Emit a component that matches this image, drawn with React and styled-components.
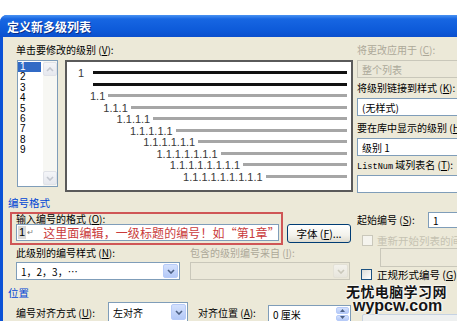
import React from 'react';
import styled, { createGlobalStyle } from 'styled-components';

const GlobalStyle = createGlobalStyle`
  html, body {
    margin: 0;
    padding: 0;
    background: #fff;
  }
  body {
    font-family: "Noto Sans CJK SC", "Noto Sans", sans-serif;
  }
  * {
    box-sizing: border-box;
  }
`;

const Page = styled.div`
  position: relative;
  width: 457px;
  height: 321px;
  overflow: hidden;
  padding-top: 15px;
  background: #fff;
`;

const Window = styled.div`
  width: 520px;
  height: 330px;
  display: flex;
  flex-direction: column;
  background: #0b52d6;
  border-top-left-radius: 7px;
  overflow: hidden;
`;

const TitleBar = styled.div`
  height: 22px;
  flex: none;
  display: flex;
  align-items: center;
  padding-left: 7px;
  padding-top: 1px;
  background: linear-gradient(#4a92f2 0%, #1766e2 18%, #0d5ad9 70%, #0b4fcd 100%);
  color: #fff;
  font-size: 12px;
  font-weight: 700;
  text-shadow: 1px 1px 0 #0a2f8a;
  white-space: nowrap;
`;

const Body = styled.div`
  flex: 1;
  margin-left: 3px;
  background: #ece9d8;
  padding-left: 5px;
  display: flex;
  flex-direction: column;
`;

const Acc = styled.span`
  text-decoration: underline;
`;

const Label = styled.div`
  flex: none;
  height: ${p => p.$h || 14}px;
  line-height: ${p => p.$h || 14}px;
  width: ${p => (p.$w ? `${p.$w}px` : 'auto')};
  font-size: 10px;
  color: ${p => (p.$disabled ? '#aca899' : '#000')};
  white-space: nowrap;
`;

const MonoWord = styled.span`
  font-family: "Liberation Mono", monospace;
  font-size: 8.6px;
`;

/* ---------- top: level list + preview + side fields ---------- */

const TopSection = styled.div`
  height: 159px;
  flex: none;
  display: flex;
  padding-left: 8px;
`;

const LevelPane = styled.div`
  width: 337px;
  flex: none;
  padding-top: 6px;
`;

const LevelRow = styled.div`
  margin-top: 3px;
  display: flex;
  align-items: flex-start;
`;

const LevelList = styled.div`
  margin-left: 1px;
  width: 41px;
  height: 127px;
  flex: none;
  display: flex;
  border: 1px solid #7f9db9;
  background: #fff;
`;

const LevelItems = styled.div`
  flex: 1;
  padding-top: 1px;
  display: flex;
  flex-direction: column;
`;

const LevelItem = styled.div`
  height: 10.4px;
  line-height: 10.4px;
  width: 23px;
  padding-left: 2px;
  font-family: "Liberation Sans", Arial, sans-serif;
  font-size: 10px;
  color: ${p => (p.$selected ? '#fff' : '#000')};
  background: ${p => (p.$selected ? '#316ac5' : 'transparent')};
  overflow: hidden;
`;

const ScrollTrack = styled.div`
  width: 14px;
  flex: none;
  display: flex;
  flex-direction: column;
  justify-content: space-between;
  background: #f7f7f3;
  padding: 1px 0 1px 0;
`;

const ScrollButton = styled.div`
  height: 14px;
  border: 1px solid #e0e2e8;
  border-radius: 2px;
  background: linear-gradient(#f4f5f8, #e6e8ee);
  display: flex;
  align-items: center;
  justify-content: center;
`;

const Preview = styled.div`
  margin-left: 7px;
  width: 288px;
  height: 132px;
  flex: none;
  border: 2px solid #5a5a5a;
  background: #fff;
  padding: 5px 4px 0 11px;
  display: flex;
  flex-direction: column;
`;

const PreviewRow = styled.div`
  height: 11.5px;
  display: flex;
  align-items: center;
  padding-left: ${p => p.$indent}px;
`;

const PreviewNum = styled.span`
  min-width: ${p => p.$min || 0}px;
  font-family: "Liberation Sans", Arial, sans-serif;
  font-size: 11px;
  line-height: 11px;
  color: #3a3a3a;
  white-space: nowrap;
  margin-top: 2px;
`;

const PreviewLine = styled.div`
  flex: 1;
  height: 3px;
  margin-left: ${p => p.$gap}px;
  background: ${p => (p.$strong ? '#111' : '#a6a6a6')};
`;

const SidePane = styled.div`
  margin-left: 4px;
  width: 140px;
  flex: none;
  padding-top: 6px;
  display: flex;
  flex-direction: column;
`;

/* ---------- generic controls ---------- */

const Combo = styled.div`
  flex: none;
  display: flex;
  width: ${p => p.$w}px;
  height: ${p => p.$h || 18}px;
  margin-top: ${p => p.$mt || 0}px;
  margin-left: ${p => p.$ml || 0}px;
  border: 1px solid ${p => (p.$disabled ? '#c9c7ba' : '#7f9db9')};
  background: ${p => (p.$disabled ? '#ebe8d9' : '#fff')};
`;

const ComboText = styled.div`
  flex: 1;
  display: flex;
  align-items: center;
  padding-left: 4px;
  font-size: 10px;
  color: ${p => (p.$disabled ? '#aca899' : '#000')};
  white-space: nowrap;
  overflow: hidden;
`;

const DropButton = styled.div`
  width: 15px;
  flex: none;
  margin: 1px;
  border-radius: 2px;
  border: 1px solid ${p => (p.$disabled ? '#e3e1d6' : '#b7cbf8')};
  background: ${p =>
    p.$disabled
      ? 'linear-gradient(#f3f2ec, #e7e5dc)'
      : 'linear-gradient(#d4e1fd, #b4c9f7)'};
  display: flex;
  align-items: center;
  justify-content: center;
`;

const SpinBox = styled.div`
  flex: none;
  display: flex;
  flex-direction: column;
  width: 13px;
  margin: 1px;
  gap: 1px;
`;

const SpinHalf = styled.div`
  flex: 1;
  border-radius: 2px;
  border: 1px solid #b7cbf8;
  background: linear-gradient(#d4e1fd, #b4c9f7);
  display: flex;
  align-items: center;
  justify-content: center;
`;

const CheckBox = styled.div`
  width: 11px;
  height: 11px;
  flex: none;
  border: 1px solid ${p => (p.$disabled ? '#cac8bb' : '#1c5180')};
  background: ${p => (p.$disabled ? '#f5f4ee' : 'linear-gradient(135deg, #dcdcd7, #fff)')};
`;

const Chevron = ({ dir = 'down', color = '#4d6185' }) => (
  <svg width="8" height="5" viewBox="0 0 8 5">
    <path
      d={dir === 'down' ? 'M1 1 L4 4 L7 1' : 'M1 4 L4 1 L7 4'}
      fill="none"
      stroke={color}
      strokeWidth="1.6"
    />
  </svg>
);

const SpinArrow = ({ dir }) => (
  <svg width="5" height="3" viewBox="0 0 5 3">
    <path d={dir === 'up' ? 'M0 3 L2.5 0 L5 3 Z' : 'M0 0 L2.5 3 L5 0 Z'} fill="#4d6185" />
  </svg>
);

/* ---------- number format group ---------- */

const GroupTitle = styled.div`
  flex: none;
  height: 14px;
  line-height: 14px;
  margin-top: ${p => p.$mt || 0}px;
  font-size: 10.5px;
  color: #0046d5;
  white-space: nowrap;
`;

const FormatSection = styled.div`
  flex: none;
  display: flex;
  height: 70px;
`;

const FormatMain = styled.div`
  width: 345px;
  flex: none;
  display: flex;
  flex-direction: column;
`;

const FrameRow = styled.div`
  margin-top: 2px;
  display: flex;
  align-items: flex-end;
`;

const AnnotationFrame = styled.div`
  margin-left: 2px;
  width: 273px;
  flex: none;
  border: 2px solid #cf5656;
  padding: 0 2px 2px 4px;
`;

const NumberInput = styled.div`
  height: 17px;
  display: flex;
  align-items: center;
  border: 1px solid #7f9db9;
  background: #fff;
  padding-left: 1px;
  white-space: nowrap;
  overflow: hidden;
`;

const NumberChip = styled.span`
  font-family: "Liberation Sans", Arial, sans-serif;
  font-size: 11px;
  line-height: 13px;
  padding: 0 1px;
  background: #d9d9d9;
  color: #000;
`;

const ReturnMark = styled.span`
  font-size: 8px;
  color: #777;
  margin-left: 1px;
  align-self: flex-start;
  margin-top: 1px;
`;

const NoteText = styled.span`
  margin-left: 9px;
  font-size: 12px;
  letter-spacing: 0.1px;
  color: #c93b3b;
`;

const XPButton = styled.div`
  margin-left: 4px;
  margin-bottom: 2px;
  width: 64px;
  height: 19px;
  flex: none;
  border: 1px solid #003c74;
  border-radius: 3px;
  background: linear-gradient(#ffffff 0%, #f3f2ec 60%, #dedbcf 100%);
  display: flex;
  align-items: center;
  justify-content: center;
  font-size: 10.5px;
  color: #000;
  white-space: nowrap;
`;

const FieldRow = styled.div`
  display: flex;
  align-items: ${p => p.$align || 'center'};
  margin-top: ${p => p.$mt || 0}px;
  padding-left: ${p => p.$pl || 0}px;
  gap: ${p => p.$gap || 0}px;
  height: ${p => (p.$h ? `${p.$h}px` : 'auto')};
`;

const FormatSide = styled.div`
  margin-left: 4px;
  width: 140px;
  flex: none;
  display: flex;
  flex-direction: column;
`;

const SpinField = styled.div`
  flex: none;
  display: flex;
  width: ${p => p.$w}px;
  height: ${p => p.$h}px;
  margin-top: ${p => p.$mt || 0}px;
  border: 1px solid #7f9db9;
  background: #fff;
`;

const SpinText = styled.div`
  flex: 1;
  display: flex;
  align-items: center;
  padding-left: 4px;
  font-size: 10px;
  white-space: nowrap;
`;

const CheckLabel = styled.span`
  margin-left: ${p => p.$ml || 4}px;
  font-size: 10.5px;
  color: ${p => (p.$disabled ? '#c5c2b2' : '#000')};
  white-space: nowrap;
`;

const GhostBox = styled.div`
  margin-left: 11px;
  margin-top: 12px;
  width: 110px;
  height: 14px;
  flex: none;
  border: 1px solid #c5d2e3;
  border-radius: 2px;
  background: #eef0f0;
`;

/* ---------- watermark over the corner ---------- */

const Watermark = styled.div`
  position: absolute;
  left: 346px;
  top: 283px;
  display: flex;
  flex-direction: column;
  align-items: flex-start;
  color: #151515;
  font-weight: 700;
  text-shadow: 0 0 2px #fff, 0 0 2px #fff, 0 0 3px #fff;
  white-space: nowrap;
  pointer-events: none;
`;

const WatermarkCn = styled.div`
  font-size: 14px;
  line-height: 17px;
  letter-spacing: 0.4px;
`;

const WatermarkEn = styled.div`
  margin-left: 7px;
  margin-top: -3px;
  font-family: "Liberation Sans", Arial, sans-serif;
  font-size: 16px;
  line-height: 17px;
`;

const levels = [
  '1.1',
  '1.1.1',
  '1.1.1.1',
  '1.1.1.1.1',
  '1.1.1.1.1.1',
  '1.1.1.1.1.1.1',
  '1.1.1.1.1.1.1.1',
  '1.1.1.1.1.1.1.1.1',
];

export default function App() {
  return (
    <>
      <GlobalStyle />
      <Page>
        <Window>
          <TitleBar>定义新多级列表</TitleBar>
          <Body>
            <TopSection>
              <LevelPane>
                <Label>
                  单击要修改的级别 (<Acc>V</Acc>):
                </Label>
                <LevelRow>
                  <LevelList>
                    <LevelItems>
                      {[1, 2, 3, 4, 5, 6, 7, 8, 9].map(n => (
                        <LevelItem key={n} $selected={n === 1}>
                          {n}
                        </LevelItem>
                      ))}
                    </LevelItems>
                    <ScrollTrack>
                      <ScrollButton>
                        <Chevron dir="up" color="#c3c7d0" />
                      </ScrollButton>
                      <ScrollButton>
                        <Chevron dir="down" color="#c3c7d0" />
                      </ScrollButton>
                    </ScrollTrack>
                  </LevelList>
                  <Preview>
                    <PreviewRow $indent={0}>
                      <PreviewNum $min={6}>1</PreviewNum>
                      <PreviewLine $strong $gap={9} />
                    </PreviewRow>
                    <PreviewRow $indent={15}>
                      <PreviewLine $strong $gap={0} />
                    </PreviewRow>
                    {levels.map((lv, i) => (
                      <PreviewRow key={lv} $indent={12 + i * 13.3}>
                        <PreviewNum>{lv}</PreviewNum>
                        <PreviewLine $gap={3} />
                      </PreviewRow>
                    ))}
                  </Preview>
                </LevelRow>
              </LevelPane>

              <SidePane>
                <Label $disabled>
                  将更改应用于 (<Acc>C</Acc>):
                </Label>
                <Combo $w={130} $mt={3} $disabled>
                  <ComboText $disabled>整个列表</ComboText>
                </Combo>
                <Label style={{ marginTop: 3 }}>
                  将级别链接到样式 (<Acc>K</Acc>):
                </Label>
                <Combo $w={130} $mt={3}>
                  <ComboText>(无样式)</ComboText>
                </Combo>
                <Label style={{ marginTop: 5 }}>
                  要在库中显示的级别 (<Acc>H</Acc>):
                </Label>
                <Combo $w={130} $mt={3}>
                  <ComboText>级别 1</ComboText>
                </Combo>
                <Label style={{ marginTop: 2 }}>
                  <MonoWord>ListNum</MonoWord> 域列表名 (<Acc>T</Acc>):
                </Label>
                <Combo $w={130} $mt={3}>
                  <ComboText />
                </Combo>
              </SidePane>
            </TopSection>

            <GroupTitle>编号格式</GroupTitle>
            <FormatSection>
              <FormatMain>
                <FrameRow>
                  <AnnotationFrame>
                    <Label $h={10}>
                      输入编号的格式 (<Acc>O</Acc>):
                    </Label>
                    <NumberInput>
                      <NumberChip>1</NumberChip>
                      <ReturnMark>↵</ReturnMark>
                      <NoteText>这里面编辑，一级标题的编号！如“第1章”</NoteText>
                    </NumberInput>
                  </AnnotationFrame>
                  <XPButton>
                    字体 (<Acc>F</Acc>)...
                  </XPButton>
                </FrameRow>
                <FieldRow $mt={1} $pl={8} $h={14}>
                  <Label $w={174}>
                    此级别的编号样式 (<Acc>N</Acc>):
                  </Label>
                  <Label $disabled>
                    包含的级别编号来自 (<Acc>I</Acc>):
                  </Label>
                </FieldRow>
                <FieldRow $mt={2} $pl={8} $gap={10}>
                  <Combo $w={164}>
                    <ComboText>1，2，3，…</ComboText>
                    <DropButton>
                      <Chevron />
                    </DropButton>
                  </Combo>
                  <Combo $w={160} $disabled>
                    <ComboText $disabled />
                    <DropButton $disabled>
                      <Chevron color="#c9c7ba" />
                    </DropButton>
                  </Combo>
                </FieldRow>
              </FormatMain>

              <FormatSide>
                <FieldRow $mt={2} $h={16}>
                  <Label $w={71}>
                    起始编号 (<Acc>S</Acc>):
                  </Label>
                  <SpinField $w={50} $h={16}>
                    <SpinText>1</SpinText>
                  </SpinField>
                </FieldRow>
                <FieldRow $mt={5} $h={14} $pl={5}>
                  <CheckBox $disabled />
                  <CheckLabel $disabled>重新开始列表的间隔 (R):</CheckLabel>
                </FieldRow>
                <Combo $w={100} $h={19} $mt={1} $ml={23} $disabled>
                  <ComboText $disabled />
                </Combo>
                <FieldRow $mt={1} $h={12} $pl={4}>
                  <CheckBox />
                  <CheckLabel $ml={5}>
                    正规形式编号 (<Acc>G</Acc>)
                  </CheckLabel>
                </FieldRow>
              </FormatSide>
            </FormatSection>

            <GroupTitle $mt={6}>位置</GroupTitle>
            <FieldRow $mt={2} $pl={8} $align="flex-start">
              <Label $w={92} style={{ marginTop: 4 }}>
                编号对齐方式 (<Acc>U</Acc>):
              </Label>
              <Combo $w={80} $h={20}>
                <ComboText>左对齐</ComboText>
                <DropButton>
                  <Chevron />
                </DropButton>
              </Combo>
              <Label $w={70} style={{ marginLeft: 10, marginTop: 4 }}>
                对齐位置 (<Acc>A</Acc>):
              </Label>
              <SpinField $w={83} $h={18} $mt={3}>
                <SpinText>0 厘米</SpinText>
                <SpinBox>
                  <SpinHalf>
                    <SpinArrow dir="up" />
                  </SpinHalf>
                  <SpinHalf>
                    <SpinArrow dir="down" />
                  </SpinHalf>
                </SpinBox>
              </SpinField>
              <GhostBox />
            </FieldRow>
          </Body>
        </Window>

        <Watermark>
          <WatermarkCn>无忧电脑学习网</WatermarkCn>
          <WatermarkEn>wypcw.com</WatermarkEn>
        </Watermark>
      </Page>
    </>
  );
}
